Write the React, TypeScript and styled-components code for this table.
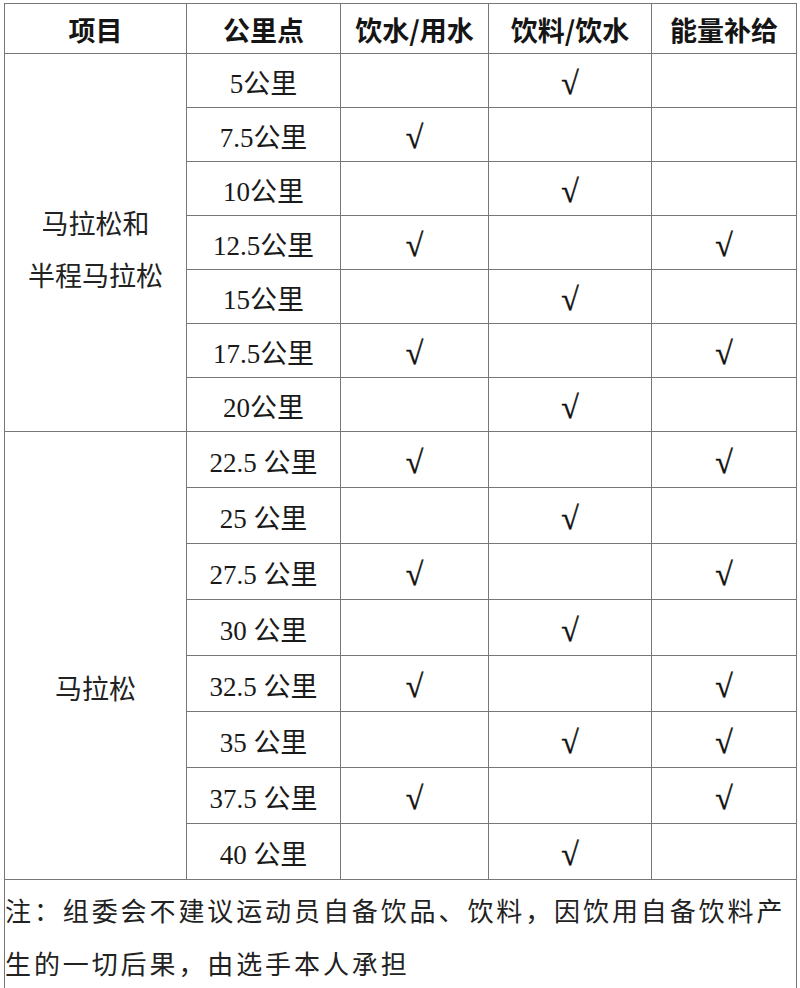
import styled, { createGlobalStyle } from "styled-components";

const GlobalStyle = createGlobalStyle`
  html, body {
    margin: 0;
    padding: 0;
    background: #fff;
  }
  body {
    font-family: "Liberation Serif", "Noto Sans CJK SC", serif;
    color: #111;
  }
`;

const Pagina = styled.div`
  padding: 3px 4px;
  width: 800px;
  box-sizing: border-box;
`;

const Tabela = styled.table`
  width: 792px;
  border-collapse: collapse;
  table-layout: fixed;
  td,
  th {
    border: 1.5px solid #777;
    text-align: center;
    vertical-align: middle;
    padding: 0;
    box-sizing: border-box;
  }
`;

const Cabecalho = styled.th`
  height: 50px;
  font-family: "Noto Sans CJK SC", sans-serif;
  font-weight: 700;
  font-size: 27px;
  line-height: 30px;
  color: #151515;
  && {
    padding-top: 3px;
  }
`;

const Projeto = styled.td<{ $desce: number }>`
  font-family: "Noto Sans CJK SC", sans-serif;
  font-size: 27px;
  line-height: 52px;
  color: #222;
  && {
    padding-top: ${(p) => p.$desce}px;
  }
`;

const Celula = styled.td<{ $alto: number }>`
  height: ${(p) => p.$alto}px;
  font-family: "Liberation Serif", "Noto Sans CJK SC", serif;
  font-size: 27px;
  line-height: 30px;
  color: #1a1a1a;
  && {
    padding-top: 6px;
  }
`;

const Marca = styled.span`
  font-size: 32px;
  color: #111;
  -webkit-text-stroke: 0.4px #111;
`;

const Nota = styled.td`
  && {
    text-align: left;
    vertical-align: top;
    padding: 3px 0 0 0;
  }
  font-family: "Noto Sans CJK SC", sans-serif;
  font-size: 26px;
  letter-spacing: 2.9px;
  line-height: 53px;
  color: #222;
  height: 102px;
`;

type Linha = { km: string; agua: boolean; bebida: boolean; energia: boolean };

const grupo1: Linha[] = [
  { km: "5公里", agua: false, bebida: true, energia: false },
  { km: "7.5公里", agua: true, bebida: false, energia: false },
  { km: "10公里", agua: false, bebida: true, energia: false },
  { km: "12.5公里", agua: true, bebida: false, energia: true },
  { km: "15公里", agua: false, bebida: true, energia: false },
  { km: "17.5公里", agua: true, bebida: false, energia: true },
  { km: "20公里", agua: false, bebida: true, energia: false },
];

const grupo2: Linha[] = [
  { km: "22.5 公里", agua: true, bebida: false, energia: true },
  { km: "25 公里", agua: false, bebida: true, energia: false },
  { km: "27.5 公里", agua: true, bebida: false, energia: true },
  { km: "30 公里", agua: false, bebida: true, energia: false },
  { km: "32.5 公里", agua: true, bebida: false, energia: true },
  { km: "35 公里", agua: false, bebida: true, energia: true },
  { km: "37.5 公里", agua: true, bebida: false, energia: true },
  { km: "40 公里", agua: false, bebida: true, energia: false },
];

const marca = (v: boolean) => (v ? <Marca>√</Marca> : null);

const Grupo = ({
  nome,
  linhas,
  alto,
  desce,
}: {
  nome: React.ReactNode;
  linhas: Linha[];
  alto: number;
  desce: number;
}) => (
  <>
    {linhas.map((l, i) => (
      <tr key={l.km}>
        {i === 0 && (
          <Projeto rowSpan={linhas.length} $desce={desce}>
            {nome}
          </Projeto>
        )}
        <Celula $alto={alto}>{l.km}</Celula>
        <Celula $alto={alto}>{marca(l.agua)}</Celula>
        <Celula $alto={alto}>{marca(l.bebida)}</Celula>
        <Celula $alto={alto}>{marca(l.energia)}</Celula>
      </tr>
    ))}
  </>
);

const App = () => {
  return (
    <>
      <GlobalStyle />
      <Pagina>
        <Tabela>
          <colgroup>
            <col style={{ width: 182 }} />
            <col style={{ width: 154 }} />
            <col style={{ width: 148 }} />
            <col style={{ width: 163 }} />
            <col style={{ width: 145 }} />
          </colgroup>
          <thead>
            <tr>
              <Cabecalho>项目</Cabecalho>
              <Cabecalho>公里点</Cabecalho>
              <Cabecalho>饮水/用水</Cabecalho>
              <Cabecalho>饮料/饮水</Cabecalho>
              <Cabecalho>能量补给</Cabecalho>
            </tr>
          </thead>
          <tbody>
            <Grupo
              nome={
                <>
                  马拉松和
                  <br />
                  半程马拉松
                </>
              }
              linhas={grupo1}
              alto={54}
              desce={12}
            />
            <Grupo nome="马拉松" linhas={grupo2} alto={56} desce={64} />
            <tr>
              <Nota colSpan={5}>
                注：组委会不建议运动员自备饮品、饮料，因饮用自备饮料产
                <br />
                生的一切后果，由选手本人承担
              </Nota>
            </tr>
          </tbody>
        </Tabela>
      </Pagina>
    </>
  );
};

export default App;
